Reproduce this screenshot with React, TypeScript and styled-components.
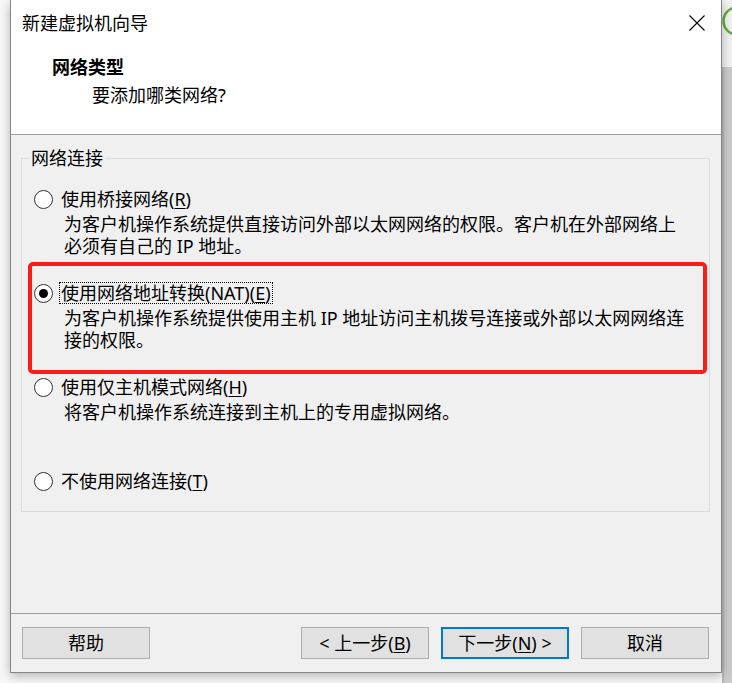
import React from "react";
import styled, { createGlobalStyle } from "styled-components";

const GlobalStyle = createGlobalStyle`
  html, body {
    margin: 0;
    padding: 0;
    background: #f8f8f8;
  }
  body {
    font-family: "Noto Sans", "Noto Sans CJK SC", sans-serif;
    font-size: 18px;
    color: #000;
  }
`;

// Page + window frame
const Page = styled.div`
  display: flex;
  width: 732px;
  height: 683px;
  padding-left: 10px;
  box-sizing: border-box;
  overflow: hidden;
`;

const Window = styled.div`
  position: relative;
  z-index: 1;
  width: 712px;
  height: 673px;
  flex-shrink: 0;
  box-sizing: border-box;
  display: flex;
  flex-direction: column;
  background: #f0f0f0;
  border: 1px solid #858585;
  border-top: none;
  box-shadow: 0 3px 10px rgba(0, 0, 0, 0.28);
`;

const SideStrip = styled.div`
  width: 10px;
  display: flex;
  flex-direction: column;
`;

const SideTop = styled.div`
  height: 67px;
  background: #f1f1f1;
  flex-shrink: 0;
`;

const SideBottom = styled.div`
  flex: 1;
  background: linear-gradient(to right, #b9b9b9 0 2px, #cbcbcb 2px);
`;

// Title bar + header
const TitleBar = styled.div`
  height: 45px;
  flex-shrink: 0;
  display: flex;
  align-items: center;
  justify-content: space-between;
  padding: 0 16px 0 11px;
  background: #fff;
  line-height: 22px;
`;

const CloseIcon = styled.svg`
  width: 16px;
  height: 16px;
  display: block;
`;

const Header = styled.div`
  height: 90px;
  flex-shrink: 0;
  box-sizing: border-box;
  padding: 11px 0 0 41px;
  background: #fff;
  border-bottom: 1px solid #a0a0a0;
  line-height: 22px;
`;

const HeaderTitle = styled.div`
  font-weight: 700;
`;

const HeaderSub = styled.div`
  margin-top: 6px;
  padding-left: 40px;
`;

// Body
const Body = styled.div`
  flex: 1;
  min-height: 0;
`;

const GroupBox = styled.fieldset`
  margin: 12px 11px 0 10px;
  padding: 19px 0 19px 0;
  border: 1px solid #dcdcdc;
  min-width: 0;
`;

const Legend = styled.legend`
  margin-left: 7px;
  padding: 0 2px;
  line-height: 22px;
`;

const Options = styled.div`
  display: flex;
  flex-direction: column;
  gap: 25px;
  padding-left: 12px;
`;

const Option = styled.div<{ $highlight?: boolean }>`
  position: relative;

  ${({ $highlight }) =>
    $highlight &&
    `
    &::before {
      content: "";
      position: absolute;
      top: -20px;
      bottom: -23px;
      left: -6px;
      right: 2px;
      border: 4px solid #fa1c16;
      border-radius: 5px;
      pointer-events: none;
    }
  `}
`;

const OptionRow = styled.label`
  display: flex;
  align-items: center;
  gap: 6px;
  height: 22px;
`;

const Radio = styled.span<{ $checked?: boolean }>`
  width: 19px;
  height: 19px;
  box-sizing: border-box;
  border-radius: 50%;
  border: 1px solid #333;
  background: #fff;
  display: flex;
  align-items: center;
  justify-content: center;
  flex-shrink: 0;

  &::after {
    content: "";
    width: 9px;
    height: 9px;
    border-radius: 50%;
    background: ${({ $checked }) => ($checked ? "#000" : "transparent")};
  }
`;

const OptionLabel = styled.span<{ $focused?: boolean }>`
  padding: 0 2px;
  line-height: 22px;
  outline: ${({ $focused }) => ($focused ? "1px dotted #000" : "none")};
  outline-offset: -1px;
`;

const Desc = styled.div`
  margin: 3px 0 0 30px;
  min-height: 44px;
  line-height: 22px;
  white-space: nowrap;
`;

const U = styled.span`
  text-decoration: underline;
  text-underline-offset: 2px;
`;

// Footer
const Footer = styled.div`
  height: 59px;
  flex-shrink: 0;
  box-sizing: border-box;
  border-top: 1px solid #a0a0a0;
  padding: 13px 12px 0 11px;
  display: flex;
  gap: 12px;
`;

const Button = styled.button<{ $default?: boolean; $pushRight?: boolean }>`
  width: 128px;
  height: 32px;
  box-sizing: border-box;
  padding: 0;
  margin-left: ${({ $pushRight }) => ($pushRight ? "auto" : "0")};
  background: #e1e1e1;
  border: ${({ $default }) =>
    $default ? "2px solid #0078d7" : "1px solid #adadad"};
  font-family: inherit;
  font-size: 18px;
  line-height: 22px;
  color: #000;
`;

const options = [
  {
    label: "使用桥接网络",
    key: "R",
    lines: [
      "为客户机操作系统提供直接访问外部以太网网络的权限。客户机在外部网络上",
      "必须有自己的 IP 地址。",
    ],
  },
  {
    label: "使用网络地址转换(NAT)",
    key: "E",
    checked: true,
    lines: [
      "为客户机操作系统提供使用主机 IP 地址访问主机拨号连接或外部以太网网络连",
      "接的权限。",
    ],
  },
  {
    label: "使用仅主机模式网络",
    key: "H",
    lines: ["将客户机操作系统连接到主机上的专用虚拟网络。"],
  },
  {
    label: "不使用网络连接",
    key: "T",
    lines: [],
  },
];

const App: React.FC = () => {
  return (
    <>
      <GlobalStyle />
      <Page>
        <Window>
          <TitleBar>
            <span>新建虚拟机向导</span>
            <CloseIcon viewBox="0 0 16 16">
              <path d="M0.5 0.5 L15.5 15.5 M15.5 0.5 L0.5 15.5" stroke="#000" strokeWidth="1.1" />
            </CloseIcon>
          </TitleBar>
          <Header>
            <HeaderTitle>网络类型</HeaderTitle>
            <HeaderSub>要添加哪类网络?</HeaderSub>
          </Header>

          <Body>
            <GroupBox>
              <Legend>网络连接</Legend>
              <Options>
                {options.map((opt) => (
                  <Option key={opt.key} $highlight={opt.checked}>
                    <OptionRow>
                      <Radio $checked={opt.checked} />
                      <OptionLabel $focused={opt.checked}>
                        {opt.label}(<U>{opt.key}</U>)
                      </OptionLabel>
                    </OptionRow>
                    {opt.lines.length > 0 && (
                      <Desc>
                        {opt.lines.map((line, i) => (
                          <div key={i}>{line}</div>
                        ))}
                      </Desc>
                    )}
                  </Option>
                ))}
              </Options>
            </GroupBox>
          </Body>

          <Footer>
            <Button>帮助</Button>
            <Button $pushRight>
              &lt; 上一步(<U>B</U>)
            </Button>
            <Button $default>
              下一步(<U>N</U>) &gt;
            </Button>
            <Button>取消</Button>
          </Footer>
        </Window>

        <SideStrip>
          <SideTop>
            <svg width="10" height="67" viewBox="0 0 10 67">
              <circle cx="15" cy="21" r="13.5" fill="none" stroke="#62ad3c" strokeWidth="2.5" />
            </svg>
          </SideTop>
          <SideBottom />
        </SideStrip>
      </Page>
    </>
  );
};

export default App;
